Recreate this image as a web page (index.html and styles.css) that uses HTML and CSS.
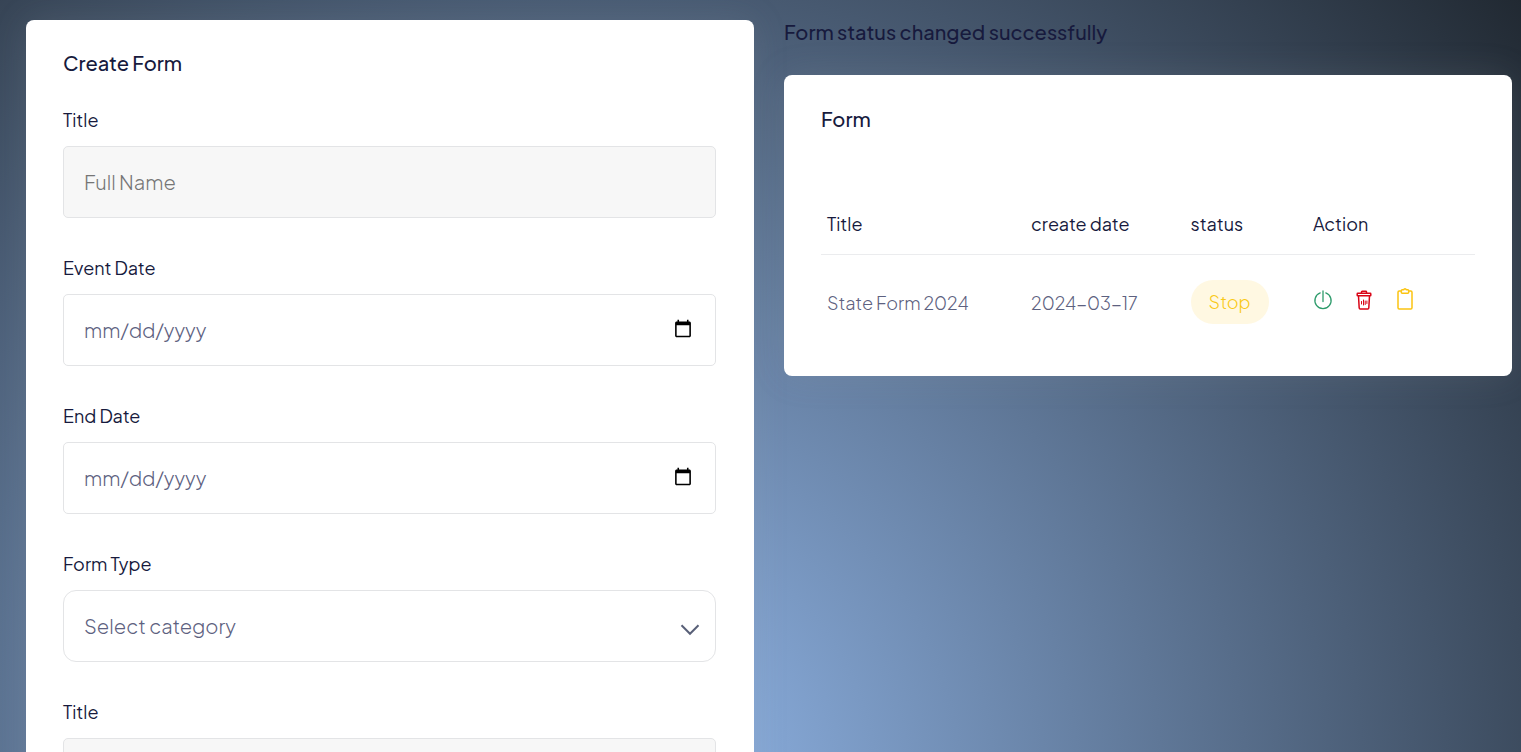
FILE: index.html
```html
<!DOCTYPE html>
<html lang="en">
<head>
<meta charset="utf-8">
<meta name="viewport" content="width=device-width, initial-scale=1">
<title>Create Form</title>
<link rel="stylesheet" href="styles.css">
</head>
<body>
<main class="page">
  <section class="card form-card">
    <h1 class="heading">Create Form</h1>
    <form class="fields">
      <div class="field">
        <label class="label" for="title">Title</label>
        <input class="control filled" id="title" type="text" placeholder="Full Name">
      </div>
      <div class="field">
        <label class="label" for="event-date">Event Date</label>
        <input class="control" id="event-date" type="date">
      </div>
      <div class="field">
        <label class="label" for="end-date">End Date</label>
        <input class="control" id="end-date" type="date">
      </div>
      <div class="field">
        <label class="label" for="form-type">Form Type</label>
        <div class="select-wrap">
          <select class="control select" id="form-type"><option>Select category</option></select>
          <svg class="chevron" viewBox="0 0 20 12" aria-hidden="true"><path d="M1.5 1.2 10 9.8l8.500-8.600"/></svg>
        </div>
      </div>
      <div class="field">
        <label class="label" for="subtitle">Title</label>
        <input class="control filled" id="subtitle" type="text">
      </div>
    </form>
  </section>
  <div class="side">
    <p class="heading notice" role="status">Form status changed successfully</p>
    <section class="card list-card">
      <h2 class="heading">Form</h2>
      <table class="table">
        <thead>
          <tr><th class="col-title">Title</th><th class="col-date">create date</th><th class="col-status">status</th><th>Action</th></tr>
        </thead>
        <tbody>
          <tr>
            <td>State Form 2024</td>
            <td>2024-03-17</td>
            <td><span class="badge">Stop</span></td>
            <td>
              <div class="actions">
                <button class="action power" type="button" aria-label="Toggle status">
                  <svg class="icon" viewBox="0 0 20 20"><path d="M7.200 2.900A8.100 8.100 0 1 0 12.800 2.900M10 1v10.500"/></svg>
                </button>
                <button class="action trash" type="button" aria-label="Delete">
                  <svg class="icon" viewBox="0 0 20 20"><path d="M4.500 6l.700 12q.1 1 1 1h7.600q.9 0 1-1l.700-12M3.800 3.300h12.400q.6 0 .6.600v1.300q0 .6-.6.600H3.800q-.6 0-.6-.6V3.900q0-.6.6-.6ZM7.500 3.300V2q0-.7.700-.7h3.600q.7 0 .7.700v1.300"/><path class="thin" d="M7.500 11.500v2.500M9.500 10v5M11.200 11v3.500M12.900 11v2.500"/></svg>
                </button>
                <button class="action clip" type="button" aria-label="Open form">
                  <svg class="icon tall" viewBox="0 0 20 22"><path d="M6.500 3H4.200Q3 3 3 4.200v15.600Q3 21 4.200 21h11.600q1.200 0 1.200-1.200V4.200Q17 3 15.800 3h-2.300M7.200 1.800h1.500Q9 .8 10 .8t1.300 1h1.500q.9 0 .9.900v1.600q0 .9-.9.900H7.200q-.9 0-.9-.9V2.700q0-.9.9-.9Z"/></svg>
                </button>
              </div>
            </td>
          </tr>
        </tbody>
      </table>
    </section>
  </div>
</main>
</body>
</html>
```

FILE: styles.css
```css
* { box-sizing: border-box; }

html {
  min-height: 100%;
  background: radial-gradient(circle farthest-corner at 39% 106%, #95bbef, #212932) fixed;
}

body {
  margin: 0;
  font-family: "Plus Jakarta Sans", Inter, "Open Sans", sans-serif;
  font-size: 18px;
  font-weight: 300;
  color: #5d6180;
}

.page {
  display: grid;
  grid-template-columns: 1fr 1fr;
  align-items: start;
  gap: 30px;
  padding: 20px 9px 30px 26px;
}

.card {
  padding: 28px 38px 37px 37px;
  background: #fff;
  border-radius: 8px;
  box-shadow: 0 0 35px rgba(154, 161, 171, 0.15);
}

.list-card { padding: 29px 37px 26px; }

.heading {
  margin: 0;
  font-size: 20px;
  line-height: 30px;
  font-weight: 500;
  color: #171a3d;
}

.fields {
  display: grid;
  gap: 37px;
  margin-top: 29px;
}

.field {
  display: grid;
  gap: 13px;
}

.label {
  font-size: 18px;
  line-height: 26px;
  font-weight: 400;
  color: #171a3d;
}

.control {
  display: block;
  width: 100%;
  height: 72px;
  padding: 0 20px 2px;
  border: 1px solid #e3e4e6;
  border-radius: 5px;
  background: #fff;
  color: #5d6180;
  font: inherit;
  font-size: 20px;
}

.control::-webkit-datetime-edit-month-field,
.control::-webkit-datetime-edit-day-field,
.control::-webkit-datetime-edit-year-field {
  padding: 0;
}

.filled { background: #f7f7f7; }
.filled::placeholder { color: #757575; }

.select-wrap { position: relative; }

.select {
  appearance: none;
  border-radius: 13px;
}

.chevron {
  position: absolute;
  right: 16px;
  top: 34px;
  width: 20px;
  height: 12px;
  fill: none;
  stroke: #596078;
  stroke-width: 2;
  pointer-events: none;
}

.side {
  display: grid;
  gap: 28px;
}

.notice { margin-top: -3px; }

.table {
  width: 100%;
  margin-top: 60px;
  border-collapse: collapse;
  table-layout: fixed;
}

.table th,
.table td {
  padding: 0 6px;
  text-align: left;
}

.table th {
  height: 60px;
  border-bottom: 1px solid #ebecee;
  font-size: 18px;
  font-weight: 400;
  color: #171a3d;
}

.table td { height: 96px; }

.col-title { width: 31.2%; }
.col-date { width: 24.4%; }
.col-status { width: 18.7%; }

.badge {
  display: inline-block;
  padding: 0 18px;
  border-radius: 22px;
  background: #fff8e2;
  color: #f9c915;
  line-height: 44px;
}

.actions {
  display: flex;
  align-items: flex-end;
  gap: 21px;
  padding-bottom: 7px;
}

.action {
  display: flex;
  padding: 0;
  border: 0;
  background: none;
  cursor: pointer;
}

.icon {
  width: 20px;
  height: 20px;
  fill: none;
  stroke: currentColor;
  stroke-width: 1.5;
  stroke-linecap: round;
  stroke-linejoin: round;
}

.tall { height: 22px; }
.thin { stroke-width: 1; }
.power { color: #2d9b6b; }
.power .icon { stroke-width: 1.3; }
.trash { color: #d90416; }
.clip { color: #fbc412; }
```
